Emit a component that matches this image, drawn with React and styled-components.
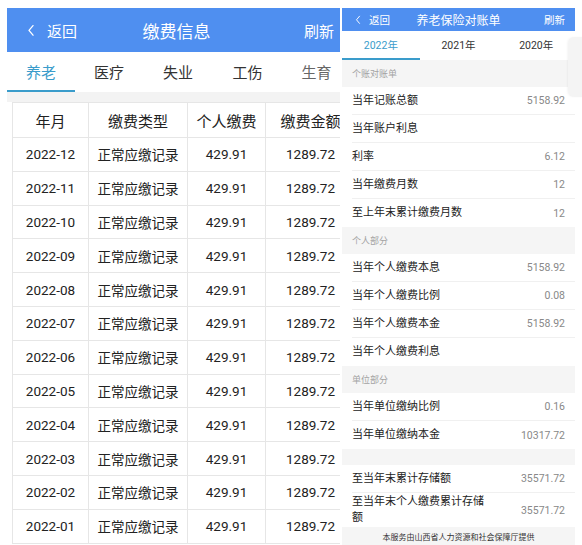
import React from 'react';
import styled, { createGlobalStyle } from 'styled-components';

const GlobalStyle = createGlobalStyle`
  html, body {
    margin: 0;
    padding: 0;
    background: #fff;
    font-family: Roboto, "Noto Sans CJK SC", sans-serif;
  }
`;

const BLUE = '#4f8ff0';
const TEAL = '#3a9ccb';

const Page = styled.div`
  position: relative;
  display: flex;
  gap: 2px;
  width: 582px;
  height: 545px;
  padding: 8px 0 0 7px;
  box-sizing: border-box;
  overflow: hidden;
  background: #fff;
`;

/* ---------- left screen ---------- */

const LeftPanel = styled.div`
  width: 333px;
  display: flex;
  flex-direction: column;
  overflow: hidden;
  background: #fff;
`;

const Header = styled.div`
  flex: none;
  height: ${p => p.$h}px;
  background: ${BLUE};
  color: #fff;
  display: grid;
  grid-template-columns: 1fr auto 1fr;
  align-items: center;
  font-size: ${p => p.$fs}px;
`;

const Back = styled.div`
  display: flex;
  align-items: center;
  gap: ${p => p.$gap}px;
  padding-left: ${p => p.$pl}px;
`;

const Title = styled.div`
  font-size: ${p => p.$fs}px;
  padding-left: ${p => p.$pl || 0}px;
`;

const Refresh = styled.div`
  justify-self: end;
  padding-right: ${p => p.$pr}px;
`;

const Tabs = styled.div`
  flex: none;
  display: flex;
  height: ${p => p.$h}px;
  background: #fff;
  white-space: nowrap;
`;

const Tab = styled.div`
  flex: ${p => (p.$w ? 'none' : '1')};
  width: ${p => (p.$w ? `${p.$w}px` : 'auto')};
  display: flex;
  align-items: center;
  justify-content: center;
  box-sizing: border-box;
  font-size: ${p => p.$fs}px;
  color: ${p => (p.$active ? TEAL : p.$dim ? '#666' : '#333')};
  border-bottom: 2px solid ${p => (p.$active ? TEAL : 'transparent')};
`;

const Band = styled.div`
  flex: none;
  height: 10px;
  background: #f3f3f3;
`;

const TableWrap = styled.div`
  flex: 1;
  padding-left: 5px;
  overflow: hidden;
`;

const Table = styled.table`
  border-collapse: collapse;
  table-layout: fixed;
  width: 343px;
  color: #222;
`;

const Th = styled.th`
  height: 34px;
  font-size: 15px;
  font-weight: 400;
  border: 1px solid #e6e6e6;
  padding: 0;
  white-space: nowrap;
`;

const Td = styled.td`
  height: 32.8px;
  font-size: 13.5px;
  text-align: center;
  border: 1px solid #e6e6e6;
  padding: 0;
  white-space: nowrap;
`;

/* ---------- right screen ---------- */

const RightPanel = styled.div`
  width: 233px;
  display: flex;
  flex-direction: column;
  overflow: hidden;
  background: #fff;
`;

const Section = styled.div`
  flex: none;
  height: ${p => p.$h || 27}px;
  background: #f5f5f5;
  color: #a3a3a3;
  font-size: 9px;
  display: flex;
  align-items: center;
  padding-left: 10px;
`;

const Row = styled.div`
  flex: none;
  height: ${p => p.$h || 28}px;
  margin-left: 10px;
  padding-right: 10px;
  box-sizing: border-box;
  display: flex;
  align-items: center;
  justify-content: space-between;
  border-bottom: ${p => (p.$last ? 'none' : '1px solid #f0f0f0')};
`;

const Label = styled.div`
  font-size: 11px;
  color: #222;
  max-width: 134px;
  line-height: 1.45;
`;

const Value = styled.div`
  font-size: 10.5px;
  color: #888;
`;

const Footer = styled.div`
  flex: none;
  height: 18px;
  background: #f5f5f5;
  color: #333;
  font-size: 8px;
  display: flex;
  align-items: center;
  justify-content: center;
`;

const Float = styled.div`
  position: absolute;
  left: 568px;
  top: 37px;
  width: 20px;
  height: 60px;
  border-radius: 6px 0 0 6px;
  background: #f4f4f4;
  box-shadow: -1px 0 2px rgba(0, 0, 0, 0.04);
`;

const Chevron = ({ size }) => (
  <svg width={size} height={size * 1.6} viewBox="0 0 10 16" fill="none">
    <path d="M7.5 2 L2.5 8 L7.5 14" stroke="#fff" strokeWidth="1.6" strokeLinecap="round" strokeLinejoin="round" />
  </svg>
);

const months = ['12', '11', '10', '09', '08', '07', '06', '05', '04', '03', '02', '01'];

const items = [
  { section: '个账对账单' },
  { label: '当年记账总额', value: '5158.92' },
  { label: '当年账户利息', value: '' },
  { label: '利率', value: '6.12' },
  { label: '当年缴费月数', value: '12' },
  { label: '至上年末累计缴费月数', value: '12', last: true },
  { section: '个人部分' },
  { label: '当年个人缴费本息', value: '5158.92' },
  { label: '当年个人缴费比例', value: '0.08' },
  { label: '当年个人缴费本金', value: '5158.92' },
  { label: '当年个人缴费利息', value: '', last: true },
  { section: '单位部分' },
  { label: '当年单位缴纳比例', value: '0.16' },
  { label: '当年单位缴纳本金', value: '10317.72', last: true },
  { section: '', h: 16 },
  { label: '至当年末累计存储额', value: '35571.72' },
  { label: '至当年末个人缴费累计存储额', value: '35571.72', h: 34, last: true },
];

const App = () => {
  return (
    <>
      <GlobalStyle />
      <Page>
        <LeftPanel>
          <Header $h={44} $fs={15}>
            <Back $gap={12} $pl={20}>
              <Chevron size={8} />
              <span>返回</span>
            </Back>
            <Title $fs={17} $pl={6}>缴费信息</Title>
            <Refresh $pr={6}>刷新</Refresh>
          </Header>
          <Tabs $h={40}>
            <Tab $w={68} $fs={15} $active>养老</Tab>
            <Tab $w={68} $fs={15}>医疗</Tab>
            <Tab $w={70} $fs={15}>失业</Tab>
            <Tab $w={69} $fs={15}>工伤</Tab>
            <Tab $w={69} $fs={15} $dim>生育</Tab>
          </Tabs>
          <Band />
          <TableWrap>
            <Table>
              <colgroup>
                <col style={{ width: 76 }} />
                <col style={{ width: 99 }} />
                <col style={{ width: 78 }} />
                <col style={{ width: 90 }} />
              </colgroup>
              <thead>
                <tr>
                  <Th>年月</Th>
                  <Th>缴费类型</Th>
                  <Th>个人缴费</Th>
                  <Th>缴费金额</Th>
                </tr>
              </thead>
              <tbody>
                {months.map(m => (
                  <tr key={m}>
                    <Td>2022-{m}</Td>
                    <Td>正常应缴记录</Td>
                    <Td>429.91</Td>
                    <Td>1289.72</Td>
                  </tr>
                ))}
              </tbody>
            </Table>
          </TableWrap>
        </LeftPanel>

        <RightPanel>
          <Header $h={23} $fs={10.5}>
            <Back $gap={8} $pl={13}>
              <Chevron size={6} />
              <span>返回</span>
            </Back>
            <Title $fs={12}>养老保险对账单</Title>
            <Refresh $pr={10}>刷新</Refresh>
          </Header>
          <Tabs $h={29}>
            <Tab $fs={10.5} $active>2022年</Tab>
            <Tab $fs={10.5}>2021年</Tab>
            <Tab $fs={10.5}>2020年</Tab>
          </Tabs>
          {items.map((it, i) =>
            it.section !== undefined ? (
              <Section key={i} $h={it.h}>{it.section}</Section>
            ) : (
              <Row key={i} $h={it.h} $last={it.last}>
                <Label>{it.label}</Label>
                <Value>{it.value}</Value>
              </Row>
            )
          )}
          <Footer>本服务由山西省人力资源和社会保障厅提供</Footer>
        </RightPanel>
        <Float />
      </Page>
    </>
  );
};

export default App;
